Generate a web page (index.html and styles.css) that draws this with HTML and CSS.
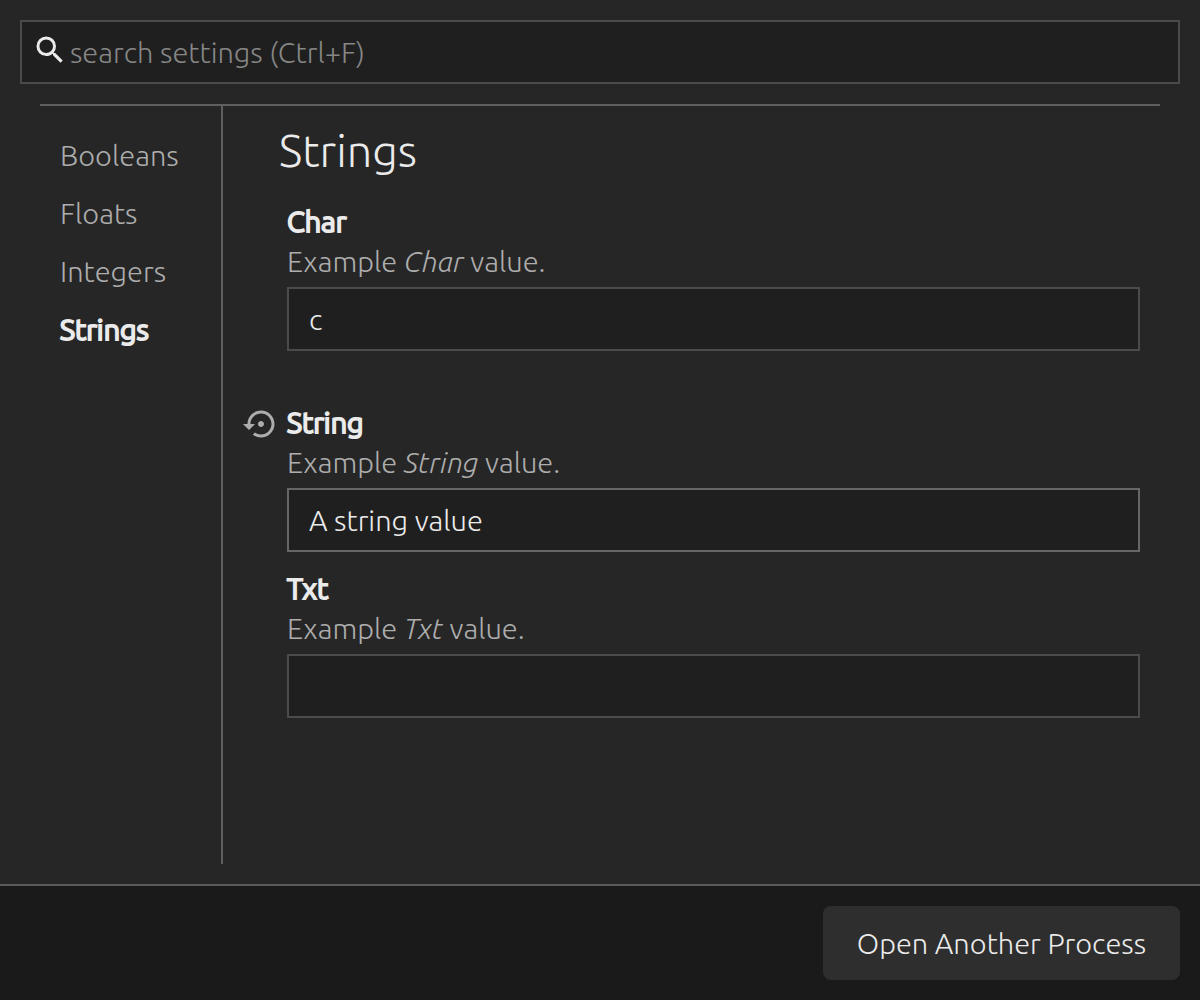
FILE: index.html
```html
<!DOCTYPE html>
<html lang="en">
<head>
<meta charset="utf-8">
<meta name="viewport" content="width=device-width, initial-scale=1">
<title>Settings</title>
<link rel="stylesheet" href="styles.css">
</head>
<body>
<div class="window">
  <label class="search">
    <svg class="search-icon" viewBox="0 0 24 24" aria-hidden="true"><path d="M15.5 14h-.79l-.28-.27A6.471 6.471 0 0 0 16 9.500 6.500 6.500 0 1 0 9.500 16c1.610 0 3.090-.590 4.230-1.570l.270.280v.790l5 4.990L20.490 19l-4.990-5zm-6 0C7.010 14 5 11.990 5 9.500S7.010 5 9.500 5 14 7.010 14 9.500 11.990 14 9.500 14z"/></svg>
    <input class="search-input" type="text" placeholder="search settings (Ctrl+F)" aria-label="Search settings">
  </label>
  <div class="content">
    <nav class="categories" aria-label="Categories">
      <a class="category" href="#booleans">Booleans</a>
      <a class="category" href="#floats">Floats</a>
      <a class="category" href="#integers">Integers</a>
      <a class="category selected" href="#strings" aria-current="page">Strings</a>
    </nav>
    <main class="settings" id="strings">
      <h1 class="title">Strings</h1>
      <div class="setting has-note">
        <label class="name" for="char">Char</label>
        <p class="description">Example <em>Char</em> value.</p>
        <input class="field" id="char" type="text" value="c">
      </div>
      <div class="setting">
        <button class="reset" type="button" aria-label="Reset String">
          <svg class="reset-icon" viewBox="0 0 24 24" aria-hidden="true"><path d="M14 12c0-1.100-.900-2-2-2s-2 .900-2 2 .900 2 2 2 2-.900 2-2zm-2-9c-4.970 0-9 4.030-9 9H0l4 4 4-4H5c0-3.870 3.130-7 7-7s7 3.130 7 7-3.130 7-7 7c-1.510 0-2.910-.490-4.060-1.300l-1.420 1.440C8.040 20.300 9.940 21 12 21c4.970 0 9-4.030 9-9s-4.030-9-9-9z"/></svg>
        </button>
        <label class="name" for="string">String</label>
        <p class="description">Example <em>String</em> value.</p>
        <input class="field active" id="string" type="text" value="A string value">
      </div>
      <div class="setting">
        <label class="name" for="txt">Txt</label>
        <p class="description">Example <em>Txt</em> value.</p>
        <input class="field" id="txt" type="text">
      </div>
    </main>
  </div>
  <footer class="actions">
    <button class="action" type="button">Open Another Process</button>
  </footer>
</div>
</body>
</html>
```
FILE: styles.css
```css
* {
  box-sizing: border-box;
}

body {
  margin: 0;
  background: #262626;
  color: #ebebeb;
  font: 300 29px/40px Ubuntu, "Noto Sans", sans-serif;
}

input,
button {
  font: inherit;
  color: inherit;
}

.window {
  display: flex;
  flex-direction: column;
  min-height: 100vh;
}

.search {
  display: flex;
  align-items: center;
  height: 64px;
  margin: 20px 20px 0;
  padding: 0 10px;
  border: 2px solid #4b4b4b;
  background: #1f1f1f;
}

.search-icon {
  flex: none;
  width: 36px;
  height: 36px;
  margin-bottom: 4px;
  fill: #ebebeb;
}

.search-input {
  flex: 1;
  min-width: 0;
  height: 40px;
  padding: 0 2px;
  border: 0;
  outline: 0;
  background: none;
}

.search-input::placeholder {
  color: #868686;
  opacity: 1;
}

.content {
  display: flex;
  flex: 1;
  margin: 20px 40px;
  border-top: 2px solid #606060;
}

.categories {
  display: flex;
  flex: none;
  flex-direction: column;
  width: 183px;
  padding: 20px 0 20px 20px;
  border-right: 2px solid #606060;
}

.category {
  line-height: 58px;
  color: #adadad;
  text-decoration: none;
}

/* Bold drawn by thickening the light face, so widths stay the same. */
.category.selected,
.name {
  color: #ebebeb;
  -webkit-text-stroke: 2px #ebebeb;
  paint-order: stroke fill;
}

.settings {
  flex: 1;
  min-width: 0;
  padding: 19px 20px 20px 64px;
}

.title {
  margin: 0 0 24px -8px;
  font-size: 45px;
  font-weight: 300;
  line-height: 52px;
}

.setting {
  position: relative;
  display: flex;
  flex-direction: column;
  margin-bottom: 16px;
}

.setting.has-note {
  padding-bottom: 35px;
}

.name {
  align-self: flex-start;
}

.description {
  margin: 0 0 6px;
  color: #adadad;
}

.field {
  width: 100%;
  height: 64px;
  padding: 0 20px;
  border: 2px solid #4b4b4b;
  border-radius: 0;
  outline: 0;
  background: #1f1f1f;
}

.field.active {
  border-color: #666;
}

.reset {
  position: absolute;
  top: 4px;
  left: -44px;
  display: flex;
  padding: 0;
  border: 0;
  background: none;
}

.reset-icon {
  width: 36px;
  height: 36px;
  fill: #adadad;
}

.actions {
  display: flex;
  justify-content: flex-end;
  padding: 20px;
  border-top: 2px solid #5c5c5c;
  background: #1a1a1a;
}

.action {
  height: 74px;
  padding: 0 34px;
  border: 0;
  border-radius: 8px;
  background: #2e2e2e;
}
```
